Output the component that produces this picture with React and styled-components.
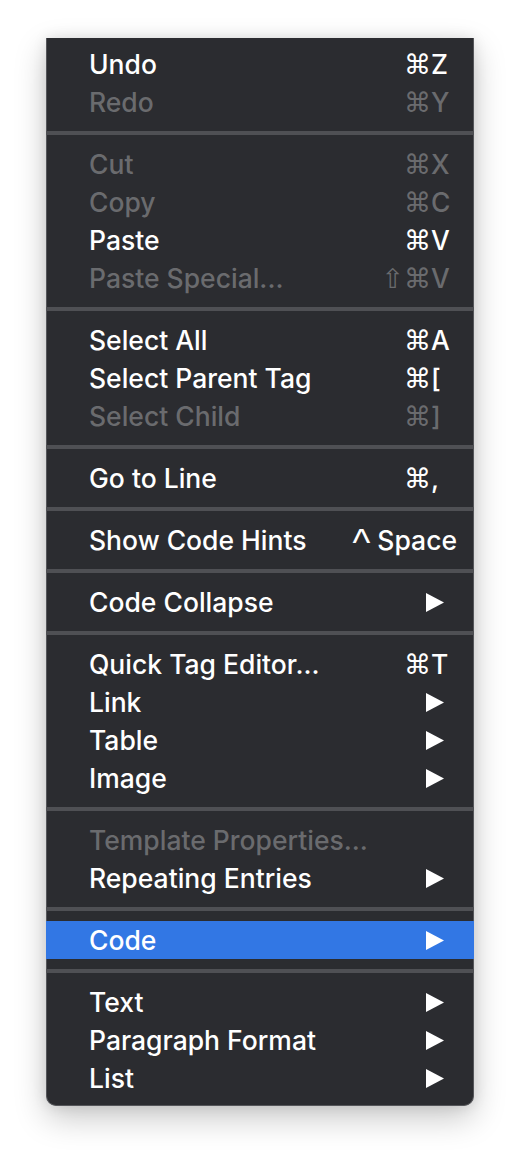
import styled, { createGlobalStyle } from 'styled-components';

const GlobalStyle = createGlobalStyle`
  html, body {
    margin: 0;
    padding: 0;
    background: #ffffff;
  }
  body {
    font-family: 'Inter', 'DejaVu Sans', sans-serif;
  }
`;

const groups = [
  [
    { label: 'Undo', mods: '⌘', key: 'Z' },
    { label: 'Redo', mods: '⌘', key: 'Y', disabled: true },
  ],
  [
    { label: 'Cut', mods: '⌘', key: 'X', disabled: true },
    { label: 'Copy', mods: '⌘', key: 'C', disabled: true },
    { label: 'Paste', mods: '⌘', key: 'V' },
    { label: 'Paste Special...', mods: '⇧⌘', key: 'V', disabled: true },
  ],
  [
    { label: 'Select All', mods: '⌘', key: 'A' },
    { label: 'Select Parent Tag', mods: '⌘', key: '[' },
    { label: 'Select Child', mods: '⌘', key: ']', disabled: true },
  ],
  [{ label: 'Go to Line', mods: '⌘', key: ',' }],
  [{ label: 'Show Code Hints', mods: '^', key: 'Space' }],
  [{ label: 'Code Collapse', submenu: true }],
  [
    { label: 'Quick Tag Editor...', mods: '⌘', key: 'T' },
    { label: 'Link', submenu: true },
    { label: 'Table', submenu: true },
    { label: 'Image', submenu: true },
  ],
  [
    { label: 'Template Properties...', disabled: true },
    { label: 'Repeating Entries', submenu: true },
  ],
  [{ label: 'Code', submenu: true, active: true }],
  [
    { label: 'Text', submenu: true },
    { label: 'Paragraph Format', submenu: true },
    { label: 'List', submenu: true },
  ],
];

const Arrow = () => (
  <ArrowIcon width="18" height="19" viewBox="0 0 18 19">
    <polygon points="0,0 18,9.5 0,19" fill="currentColor" />
  </ArrowIcon>
);

const App = () => (
  <>
    <GlobalStyle />
    <Page>
      <Menu>
        {groups.map((group, gi) => (
          <Group key={gi}>
            {gi > 0 && <Separator />}
            {group.map((item) => (
              <Item key={item.label} $disabled={item.disabled} $active={item.active}>
                <Label>{item.label}</Label>
                {item.key && (
                  <Shortcut>
                    <Mods $control={item.mods === '^'}>{item.mods}</Mods>
                    <Key>{item.key}</Key>
                  </Shortcut>
                )}
                {item.submenu && <Arrow />}
              </Item>
            ))}
          </Group>
        ))}
      </Menu>
    </Page>
  </>
);

export default App;

const Page = styled.div`
  width: 520px;
  height: 1160px;
  padding: 38px 0 0 46px;
  box-sizing: border-box;
  overflow: hidden;
`;

const Menu = styled.div`
  width: 428px;
  box-sizing: border-box;
  background: #2b2c30;
  border: 1px solid #55565a;
  border-top: none;
  border-radius: 0 0 10px 10px;
  padding: 7px 0 8px;
  box-shadow: 0 12px 32px rgba(0, 0, 0, 0.22), 0 0 14px rgba(0, 0, 0, 0.1);
`;

const Group = styled.div`
  display: flex;
  flex-direction: column;
`;

const Separator = styled.div`
  height: 4px;
  margin: 10px -1px;
  background: #4f5054;
`;

const Item = styled.div`
  display: flex;
  align-items: center;
  height: 38px;
  margin: 0 -1px;
  padding: 0 17px 0 43px;
  font-size: 26.5px;
  font-weight: 500;
  line-height: 32px;
  color: ${(p) => (p.$disabled ? '#6a6b6e' : '#ffffff')};
  background: ${(p) => (p.$active ? '#3277e4' : 'transparent')};
`;

const Label = styled.span`
  flex: 1;
  white-space: nowrap;
`;

const Shortcut = styled.span`
  display: flex;
  align-items: baseline;
`;

const Mods = styled.span`
  font-family: ${(p) => (p.$control ? "'Liberation Sans'" : "'DejaVu Sans'")}, sans-serif;
  font-size: ${(p) => (p.$control ? '38px' : '27px')};
  line-height: ${(p) => (p.$control ? '25px' : '32px')};
  font-weight: 400;
  text-align: right;
  margin-right: ${(p) => (p.$control ? '7px' : '0')};
  transform: translateY(${(p) => (p.$control ? '6px' : '0')});
`;

const Key = styled.span`
  min-width: 26px;
  text-align: left;
`;

const ArrowIcon = styled.svg`
  display: block;
  margin-right: 13px;
  flex-shrink: 0;
`;
